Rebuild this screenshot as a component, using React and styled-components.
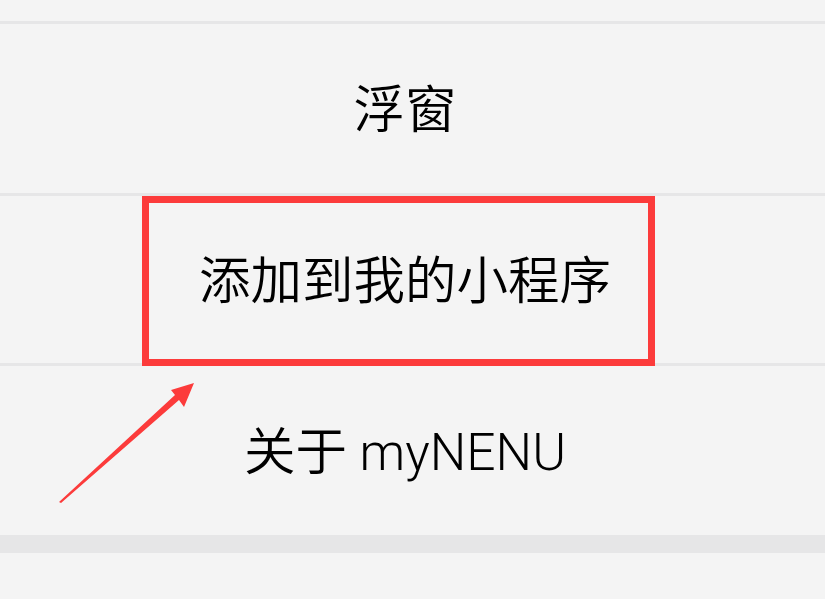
import React from "react";
import styled, { createGlobalStyle } from "styled-components";

const Global = createGlobalStyle`
  html, body {
    margin: 0;
    padding: 0;
    background: #f4f4f4;
  }
  body {
    font-family: "Roboto", "Noto Sans CJK SC", sans-serif;
  }
`;

function App() {
  return (
    <Page>
      <Global />
      {/* list */}
      <List>
        <Stub />
        <Row>浮窗</Row>
        <Row>添加到我的小程序</Row>
        <Row>关于 myNENU</Row>
      </List>
      <Band />
      <Rest />

      {/* annotation */}
      <Marker />
      <Arrow width="825" height="599" viewBox="0 0 825 599">
        <polygon
          points="59,502 175,395 171,390 194,383 184,407 179,400 61,503"
          fill="#fc3b3b"
        />
      </Arrow>
    </Page>
  );
}

export default App;

const Page = styled.div`
  position: relative;
  width: 825px;
  height: 599px;
  overflow: hidden;
  background: #f4f4f4;
`;

const List = styled.div`
  display: flex;
  flex-direction: column;
`;

const Stub = styled.div`
  height: 21px;
`;

const Row = styled.div`
  box-sizing: border-box;
  height: 172px;
  padding: 0 15px 6px 0;
  border-top: 3px solid #e6e6e7;
  display: flex;
  align-items: center;
  justify-content: center;
  font-family: "Roboto", "Noto Sans CJK SC", sans-serif;
  font-size: 51.5px;
  font-weight: 350;
  color: #000;
  &:nth-child(3) {
    height: 170px;
  }
`;

const Band = styled.div`
  height: 18px;
  background: #e6e6e7;
`;

const Rest = styled.div`
  height: 46px;
`;

const Marker = styled.div`
  position: absolute;
  left: 142px;
  top: 196px;
  width: 513px;
  height: 170px;
  box-sizing: border-box;
  border: 7px solid #fc3b3b;
`;

const Arrow = styled.svg`
  position: absolute;
  left: 0;
  top: 0;
  pointer-events: none;
`;
